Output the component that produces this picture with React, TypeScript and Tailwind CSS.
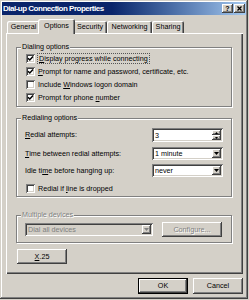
import React from "react";

const RAISED =
  "shadow-[inset_-1px_-1px_0_#404040,inset_1px_1px_0_#ffffff,inset_-2px_-2px_0_#808080]";
const SUNKEN =
  "shadow-[inset_1px_1px_0_#808080,inset_-1px_-1px_0_#ffffff,inset_2px_2px_0_#404040,inset_-2px_-2px_0_#d4d0c8]";

function Check({ checked }: { checked?: boolean }) {
  return (
    <span
      className={
        "w-[9px] h-[9px] bg-white flex items-center justify-center shrink-0 " +
        SUNKEN
      }
    >
      {checked && (
        <svg width="7" height="7" viewBox="0 0 7 7">
          <path d="M1 3.2 L2.8 5 L6 1.6" stroke="#000" strokeWidth="1.5" fill="none" />
        </svg>
      )}
    </span>
  );
}

function Arrow({ disabled }: { disabled?: boolean }) {
  return (
    <span
      className={
        "w-[9px] h-[9px] bg-[#d4d0c8] flex items-center justify-center shrink-0 " +
        RAISED
      }
    >
      <svg width="5" height="3" viewBox="0 0 5 3">
        <path d="M0 0 H5 L2.5 3 Z" fill={disabled ? "#808080" : "#000"} />
      </svg>
    </span>
  );
}

function Combo({ text, w, disabled }: { text: string; w: string; disabled?: boolean }) {
  return (
    <div
      className={
        "h-[13px] flex items-center pl-[3px] pr-[2px] " +
        w +
        " " +
        (disabled ? "bg-[#d4d0c8] text-[#808080] " : "bg-white ") +
        SUNKEN
      }
    >
      <span className="flex-1 leading-[9px]">{text}</span>
      <Arrow disabled={disabled} />
    </div>
  );
}

function Spin() {
  return (
    <div className={"h-[14px] w-[71px] bg-white flex items-center pl-[3px] pr-[2px] " + SUNKEN}>
      <span className="flex-1 leading-[9px]">3</span>
      <div className="flex flex-col">
        <span className={"w-[9px] h-[5px] bg-[#d4d0c8] flex items-center justify-center " + RAISED}>
          <svg width="3" height="2" viewBox="0 0 3 2">
            <path d="M0 2 H3 L1.5 0 Z" fill="#000" />
          </svg>
        </span>
        <span className={"w-[9px] h-[5px] bg-[#d4d0c8] flex items-center justify-center " + RAISED}>
          <svg width="3" height="2" viewBox="0 0 3 2">
            <path d="M0 0 H3 L1.5 2 Z" fill="#000" />
          </svg>
        </span>
      </div>
    </div>
  );
}

function Group({
  label,
  disabled,
  children,
  className,
}: {
  label: string;
  disabled?: boolean;
  children: React.ReactNode;
  className?: string;
}) {
  return (
    <fieldset
      className={
        "border border-[#808080] shadow-[1px_1px_0_#ffffff,inset_1px_1px_0_#ffffff] " +
        (className || "")
      }
    >
      <legend
        className={
          "ml-[4px] px-[1px] bg-[#d4d0c8] leading-[10px] " +
          (disabled ? "text-[#808080] [text-shadow:1px_1px_0_#ffffff]" : "")
        }
      >
        {label}
      </legend>
      {children}
    </fieldset>
  );
}

function Btn({
  children,
  w,
  h,
  disabled,
  def,
}: {
  children: React.ReactNode;
  w: string;
  h: string;
  disabled?: boolean;
  def?: boolean;
}) {
  return (
    <div
      className={
        "flex items-center justify-center bg-[#d4d0c8] " +
        w +
        " " +
        h +
        " " +
        (def
          ? "shadow-[inset_-1px_-1px_0_#000000,inset_1px_1px_0_#000000,inset_-2px_-2px_0_#404040,inset_2px_2px_0_#ffffff,inset_-3px_-3px_0_#808080] "
          : RAISED + " ") +
        (disabled ? "text-[#808080] [text-shadow:1px_1px_0_#ffffff]" : "text-black")
      }
    >
      {children}
    </div>
  );
}

function Tab({ label, w, selected, extra }: { label: React.ReactNode; w: string; selected?: boolean; extra?: string }) {
  return (
    <div
      className={
        "flex items-center justify-center bg-[#d4d0c8] rounded-t-[2px] shadow-[inset_1px_1px_0_#ffffff,inset_-1px_0_0_#404040,inset_-2px_0_0_#808080] " +
        w +
        " " +
        (selected ? "h-[15px] -mb-[1px] relative z-10 pb-[2px] " : "h-[12px] ") +
        (extra || "")
      }
    >
      {label}
    </div>
  );
}

export default function App() {
  return (
    <div className="w-[249px] h-[300px] bg-[#d4d0c8] text-[7.2px] text-black font-['Liberation_Sans',Arial,sans-serif] leading-none">
      <div className="w-[248px] h-[299px] p-[2px] flex flex-col shadow-[inset_-1px_-1px_0_#404040,inset_1px_1px_0_#d4d0c8,inset_-2px_-2px_0_#808080,inset_2px_2px_0_#ffffff]">
        {/* Title bar */}
        <div className="h-[13px] flex items-center bg-linear-to-r from-[#0a246a] from-45% to-[#a6caf0] pl-[1px] pr-[1px]">
          <span className="flex-1 text-white font-bold text-[8px] tracking-[-0.5px] leading-none">
            Dial-up Connection Properties
          </span>
          <div className="flex gap-[1px]">
            <span className={"w-[11px] h-[9px] bg-[#d4d0c8] flex items-center justify-center text-[7px] font-bold " + RAISED}>
              ?
            </span>
            <span className={"w-[11px] h-[9px] bg-[#d4d0c8] flex items-center justify-center " + RAISED}>
              <svg width="5" height="5" viewBox="0 0 5 5">
                <path d="M0.5 0.5 L4.5 4.5 M4.5 0.5 L0.5 4.5" stroke="#000" strokeWidth="1.3" />
              </svg>
            </span>
          </div>
        </div>

        {/* Tabs */}
        <div className="mt-[4px] ml-[5px] h-[14px] flex items-end">
          <Tab label="General" w="w-[33px]" />
          <Tab label="Options" w="w-[37px]" selected extra="-ml-[2px] -mr-[2px]" />
          <Tab label="Security" w="w-[34px]" />
          <Tab label="Networking" w="w-[45px]" />
          <Tab label="Sharing" w="w-[32px]" />
        </div>

        {/* Panel */}
        <div
          className={
            "ml-[4px] w-[237px] h-[241px] pt-[9px] pl-[10px] flex flex-col shadow-[inset_1px_1px_0_#ffffff,inset_-1px_-1px_0_#404040,inset_-2px_-2px_0_#808080]"
          }
        >
          <Group label="Dialing options" className="w-[216px]">
            <div className="pt-0 pb-[2px] pl-[9px] flex flex-col">
              <div className="h-[13px] flex items-center gap-[2px]">
                <Check checked />
                <span className="border border-dotted border-[#555] px-[1px] leading-[9px]">
                  <span className="underline">D</span>isplay progress while connecting
                </span>
              </div>
              <div className="h-[13px] flex items-center gap-[3px]">
                <Check checked />
                <span>
                  <span className="underline">P</span>rompt for name and password, certificate, etc.
                </span>
              </div>
              <div className="h-[13px] flex items-center gap-[3px]">
                <Check />
                <span>
                  Include <span className="underline">W</span>indows logon domain
                </span>
              </div>
              <div className="h-[13px] flex items-center gap-[3px]">
                <Check checked />
                <span>
                  Prompt for phone <span className="underline">n</span>umber
                </span>
              </div>
            </div>
          </Group>

          <Group label="Redialing options" className="w-[216px] mt-[6px]">
            <div className="pt-[5px] pb-[1px] pl-[8px] flex flex-col">
              <div className="h-[14px] flex items-center">
                <span className="w-[127px]">
                  <span className="underline">R</span>edial attempts:
                </span>
                <Spin />
              </div>
              <div className="h-[13px] mt-[5px] flex items-center">
                <span className="w-[127px]">
                  <span className="underline">T</span>ime between redial attempts:
                </span>
                <Combo text="1 minute" w="w-[71px]" />
              </div>
              <div className="h-[13px] mt-[4px] flex items-center">
                <span className="w-[127px]">
                  Idle ti<span className="underline">m</span>e before hanging up:
                </span>
                <Combo text="never" w="w-[71px]" />
              </div>
              <div className="h-[13px] mt-[5px] flex items-center gap-[3px] pl-[1px]">
                <Check />
                <span>
                  Redial if <span className="underline">l</span>ine is dropped
                </span>
              </div>
            </div>
          </Group>

          <Group label="Multiple devices" disabled className="w-[216px] mt-[13px]">
            <div className="pt-[2px] pb-[5px] pl-[8px] flex items-center">
              <Combo text="Dial all devices" w="w-[128px]" disabled />
              <div className="ml-[9px]">
                <Btn w="w-[60px]" h="h-[15px]" disabled>
                  Configure...
                </Btn>
              </div>
            </div>
          </Group>

          <div className="mt-[6px] ml-[1px]">
            <Btn w="w-[50px]" h="h-[15px]">
              <span>
                <span className="underline">X</span>.25
              </span>
            </Btn>
          </div>
        </div>

        {/* Bottom buttons */}
        <div className="mt-[4px] w-[241px] flex justify-end gap-[5px]">
          <Btn w="w-[50px]" h="h-[16px]" def>
            OK
          </Btn>
          <Btn w="w-[50px]" h="h-[16px]">
            Cancel
          </Btn>
        </div>
      </div>
    </div>
  );
}
